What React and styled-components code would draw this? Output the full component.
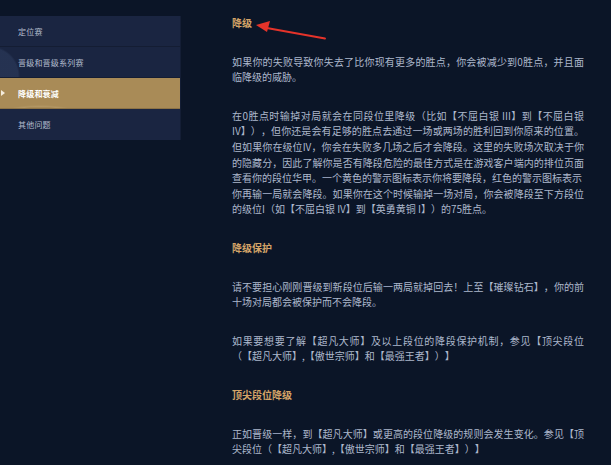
import React from 'react'
import styled, { createGlobalStyle } from 'styled-components';

const GlobalStyle = createGlobalStyle`
  html, body {
    margin: 0;
    padding: 0;
    background: #0b1527;
  }
  body {
    font-family: "Noto Sans CJK SC", "Noto Sans", sans-serif;
    text-spacing-trim: space-all;
  }
`;

const Page = styled.div`
  position: relative;
  width: 611px;
  height: 465px;
  overflow: hidden;
  display: flex;
  align-items: flex-start;
  background: #0b1527;
`;

const Sidebar = styled.nav`
  width: 180px;
  margin-top: 16px;
  display: flex;
  flex-direction: column;
  background:
    radial-gradient(circle at -10px 60px, rgba(70, 90, 130, 0.25) 0, rgba(70, 90, 130, 0.25) 28px, transparent 30px),
    #1a2541;
  box-shadow: 1px 0 0 #141e35;
`;

const NavItem = styled.div`
  position: relative;
  height: 31px;
  display: flex;
  align-items: center;
  padding-left: 18px;
  box-sizing: border-box;
  font-size: 8px;
  letter-spacing: 0.2px;
  color: ${p => (p.$active ? '#ffffff' : '#b3bccd')};
  font-weight: ${p => (p.$active ? 700 : 400)};
  border-bottom: 1px solid ${p => (p.$active ? '#8d7346' : '#141d33')};
  background: ${p =>
    p.$active
      ? 'radial-gradient(ellipse at 40px 40px, rgba(255,235,190,0.0) 0, rgba(255,235,190,0.0) 38px, rgba(255,235,190,0.12) 40px, rgba(255,235,190,0.0) 46px), #a98b57'
      : 'transparent'};

  &:last-child {
    border-bottom: none;
  }
`;

const Pointer = styled.span`
  position: absolute;
  left: 1px;
  top: 12px;
  width: 0;
  height: 0;
  border-top: 3px solid transparent;
  border-bottom: 3px solid transparent;
  border-left: 4px solid #f4ecdc;
`;

const Content = styled.main`
  margin-left: 52px;
  padding-top: 15px;
  width: 352px;
  display: flex;
  flex-direction: column;
  gap: 23px;
`;

const Heading = styled.h3`
  margin: 0;
  font-size: 10px;
  line-height: 15.6px;
  font-weight: 700;
  color: #d4a468;
  text-spacing-trim: space-all;
`;

const Para = styled.p`
  margin: 0;
  font-size: 10px;
  line-height: 15.6px;
  color: #adb8cc;
  text-align: justify;
  text-spacing-trim: space-all;
`;

const Arrow = styled.svg`
  position: absolute;
  left: 250px;
  top: 18px;
  overflow: visible;
`;

const navItems = ['定位赛', '晋级和晋级系列赛', '降级和衰减', '其他问题'];

export default function App() {
  return (
    <Page>
      <GlobalStyle />
      <Sidebar>
        {navItems.map(label => (
          <NavItem key={label} $active={label === '降级和衰减'}>
            {label === '降级和衰减' && <Pointer />}
            {label}
          </NavItem>
        ))}
      </Sidebar>
      <Content>
        <Heading>降级</Heading>
        <Para>如果你的失败导致你失去了比你现有更多的胜点，你会被减少到0胜点，并且面临降级的威胁。</Para>
        <Para>
          在0胜点时输掉对局就会在同段位里降级（比如【不屈白银 III】到【不屈白银 IV】），但你还是会有足够的胜点去通过一场或两场的胜利回到你原来的位置。但如果你在级位IV，你会在失败多几场之后才会降段。这里的失败场次取决于你的隐藏分，因此了解你是否有降段危险的最佳方式是在游戏客户端内的排位页面查看你的段位华甲。一个黄色的警示图标表示你将要降段，红色的警示图标表示<br />你再输一局就会降段。如果你在这个时候输掉一场对局，你会被降段至下方段位的级位I（如【不屈白银 IV】到【英勇黄铜 I】）的75胜点。
        </Para>
        <Heading>降级保护</Heading>
        <Para>请不要担心刚刚晋级到新段位后输一两局就掉回去！上至【璀璨钻石】，你的前十场对局都会被保护而不会降段。</Para>
        <Para>如果要想要了解【超凡大师】及以上段位的降段保护机制，参见【顶尖段位（【超凡大师】,【傲世宗师】和【最强王者】）】</Para>
        <Heading>顶尖段位降级</Heading>
        <Para>正如晋级一样，到【超凡大师】或更高的段位降级的规则会发生变化。参见【顶尖段位（【超凡大师】,【傲世宗师】和【最强王者】）】</Para>
      </Content>
      <Arrow width="80" height="30" viewBox="0 0 80 30">
        <line x1="14" y1="9.5" x2="75" y2="20.5" stroke="#e5332a" strokeWidth="2" strokeLinecap="round" />
        <polygon points="6,7 20,3 17,14" fill="#e5332a" />
      </Arrow>
    </Page>
  )
}
